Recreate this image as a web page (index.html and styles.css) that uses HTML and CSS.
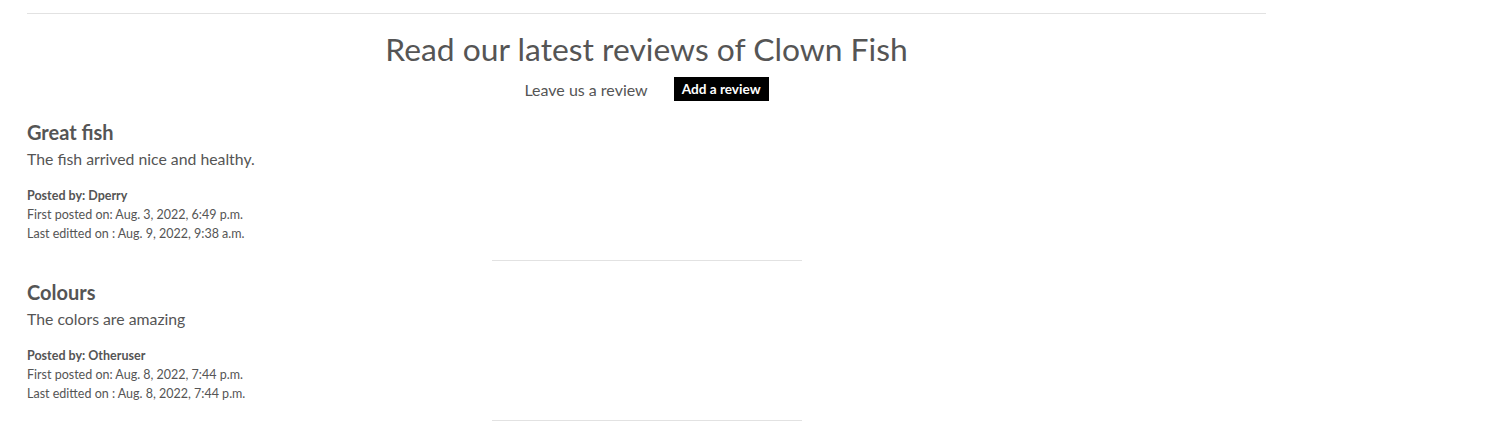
FILE: index.html
```html
<!DOCTYPE html>
<html>
<head>
<meta charset="utf-8">
<link rel="stylesheet" href="styles.css">
</head>
<body>
<main class="container">
  <hr class="top-rule">
  <section class="reviews-head">
    <h2 class="reviews-title">Read our latest reviews of Clown Fish</h2>
    <div class="leave-row">
      <span class="leave-text">Leave us a review</span>
      <a class="btn-add" href="#">Add a review</a>
    </div>
  </section>
  <article class="review">
    <h3 class="review-title">Great fish</h3>
    <p class="review-body">The fish arrived nice and healthy.</p>
    <div class="meta">
      <p class="meta-author">Posted by: Dperry</p>
      <p class="meta-line">First posted on: Aug. 3, 2022, 6:49 p.m.</p>
      <p class="meta-line">Last editted on : Aug. 9, 2022, 9:38 a.m.</p>
    </div>
    <hr class="review-rule">
  </article>
  <article class="review">
    <h3 class="review-title">Colours</h3>
    <p class="review-body">The colors are amazing</p>
    <div class="meta">
      <p class="meta-author">Posted by: Otheruser</p>
      <p class="meta-line">First posted on: Aug. 8, 2022, 7:44 p.m.</p>
      <p class="meta-line">Last editted on : Aug. 8, 2022, 7:44 p.m.</p>
    </div>
    <hr class="review-rule">
  </article>
</main>
</body>
</html>
```
FILE: styles.css
```css
* { box-sizing: border-box; }
body {
  margin: 0;
  font-family: Lato, "Liberation Sans", sans-serif;
  color: #555;
  background: #fff;
}
.container {
  width: 1239px;
  margin-left: 27px;
  padding-top: 13px;
}
.top-rule {
  margin: 0;
  border: 0;
  border-top: 1px solid #e2e2e2;
}
.reviews-head {
  display: flex;
  flex-direction: column;
  align-items: center;
  padding-top: 15px;
}
.reviews-title {
  margin: 0;
  font-size: 31.8px;
  font-weight: 400;
  line-height: 40px;
  color: #555;
}
.leave-row {
  display: flex;
  align-items: center;
  gap: 26px;
  margin-top: 8px;
}
.leave-text {
  font-size: 16px;
  color: #555;
}
.btn-add {
  background: #000;
  color: #fff;
  font-weight: 700;
  font-size: 13.6px;
  text-decoration: none;
  padding: 0 8px;
  height: 24px;
  display: flex;
  align-items: center;
}
.review {
  display: flex;
  flex-direction: column;
  padding-top: 19px;
}
.review-title {
  margin: 0;
  font-size: 20px;
  font-weight: 700;
  line-height: 24px;
  color: #555;
}
.review-body {
  margin: 4px 0 0;
  font-size: 15.8px;
  line-height: 22px;
  color: #555;
}
.meta {
  margin-top: 16px;
}
.meta p {
  margin: 0;
  font-size: 12.5px;
  line-height: 19px;
}
.meta-author { font-weight: 700; }
.review-rule {
  align-self: center;
  width: 310px;
  margin: 17px 0 0;
  border: 0;
  border-top: 1px solid #e2e2e2;
}
```
